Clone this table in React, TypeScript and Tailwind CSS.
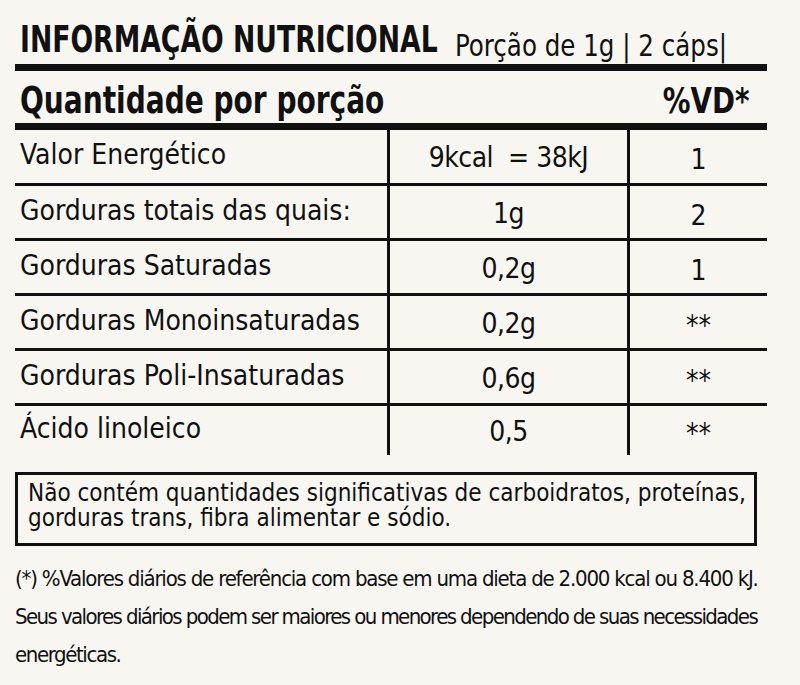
import React from "react";

const rows = [
  { name: "Valor Energético", value: "9kcal  = 38kJ", vd: "1" },
  { name: "Gorduras totais das quais:", value: "1g", vd: "2" },
  { name: "Gorduras Saturadas", value: "0,2g", vd: "1" },
  { name: "Gorduras Monoinsaturadas", value: "0,2g", vd: "**" },
  { name: "Gorduras Poli-Insaturadas", value: "0,6g", vd: "**" },
  { name: "Ácido linoleico", value: "0,5", vd: "**" },
];

const font = "font-['DejaVu_Sans_Condensed','DejaVu_Sans',sans-serif]";

export default function App() {
  return (
    <div className={`w-[800px] h-[685px] overflow-hidden bg-[#f8f6f1] px-[15px] text-[#111] ${font}`}>
      <div className="w-[752px]">
        {/* TITLE */}
        <div className="h-[64px] flex items-end pb-[6px] pl-[5px] leading-none whitespace-nowrap">
          <div className="w-[435px] shrink-0">
            <span className="inline-block origin-left scale-x-[0.78] text-[38px] font-bold">INFORMAÇÃO NUTRICIONAL</span>
          </div>
          <div className="translate-y-[3px]">
            <span className="inline-block origin-left scale-x-[0.91] text-[30px]">Porção de 1g | 2 cáps|</span>
          </div>
        </div>
        <div className="h-[7px] bg-[#111]" />

        {/* SUBHEADER */}
        <div className="h-[52px] flex items-end justify-between pb-[4px] pl-[5px] pr-[17px] leading-none whitespace-nowrap">
          <span className="inline-block origin-left scale-x-[0.82] text-[38px] font-bold">Quantidade por porção</span>
          <span className="inline-block origin-right scale-x-[0.88] text-[35px] font-bold">%VD*</span>
        </div>
        <div className="h-[7px] bg-[#111]" />

        {/* ROWS */}
        {rows.map((row, idx) => (
          <div
            key={idx}
            className={`grid grid-cols-[372px_240px_140px] ${
              idx === 0 ? "h-[53px]" : idx === rows.length - 1 ? "h-[52px] border-t-[3px] border-[#111]" : "h-[55px] border-t-[3px] border-[#111]"
            }`}
          >
            <div className="flex items-center pl-[5px] text-[28px] leading-none pb-[3px] whitespace-nowrap">{row.name}</div>
            <div className="flex items-center justify-center border-l-[3px] border-[#111] text-[28px] leading-none pt-[3px] whitespace-pre tracking-[-0.5px]">
              {row.value}
            </div>
            <div className="flex items-center justify-center border-l-[3px] border-[#111] text-[28px] leading-none pt-[7px]">
              {row.vd}
            </div>
          </div>
        ))}
      </div>

      {/* BOX */}
      <div className="mt-[17px] w-[742px] h-[74px] border-[3px] border-[#111] pl-[10px] pt-[6px] text-[24px] leading-[25px] whitespace-nowrap">
        Não contém quantidades significativas de carboidratos, proteínas,
        <br />
        gorduras trans, fibra alimentar e sódio.
      </div>

      {/* FOOTNOTES */}
      <div className="mt-[14px] text-[22px] leading-[38px] whitespace-nowrap">
        <p className="tracking-[-1.2px]">(*) %Valores diários de referência com base em uma dieta de 2.000 kcal ou 8.400 kJ.</p>
        <p className="tracking-[-1.6px]">Seus valores diários podem ser maiores ou menores dependendo de suas necessidades</p>
        <p className="tracking-[-1.4px]">energéticas.</p>
      </div>
    </div>
  );
}
